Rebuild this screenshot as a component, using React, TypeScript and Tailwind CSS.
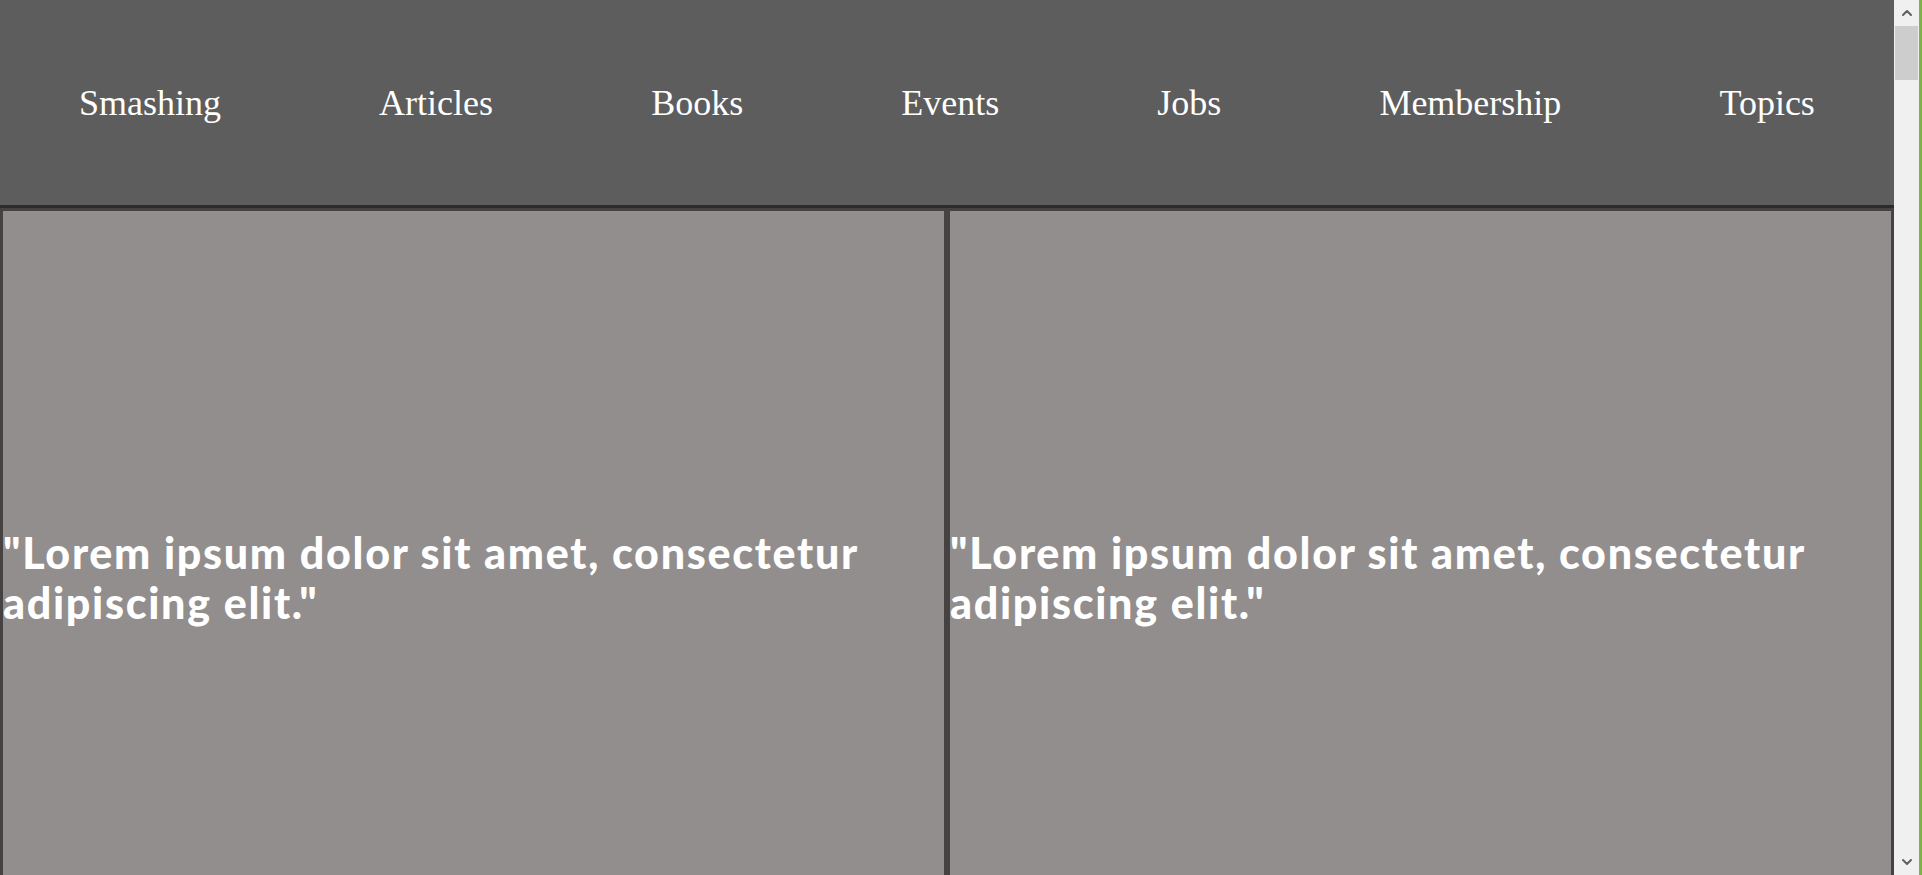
import React from 'react';
import { ChevronUp, ChevronDown } from 'lucide-react';

const links = ['Smashing', 'Articles', 'Books', 'Events', 'Jobs', 'Membership', 'Topics'];

const Quote = () => (
  <div className="flex-1 h-[740px] flex items-center border-[3px] border-[#464242] bg-[#928e8d]">
    <h2 className="text-white text-[43px] leading-[50px] tracking-[1.7px] font-black font-['Lato','Noto_Sans',sans-serif]">
      "Lorem ipsum dolor sit amet, consectetur adipiscing elit."
    </h2>
  </div>
);

const App = () => {
  return (
    <div className="h-[875px] w-full flex overflow-hidden bg-[#928e8d]">
      {/* Page */}
      <div className="flex-1 flex flex-col">
        <nav className="h-[208px] shrink-0 bg-[#5d5d5d] border-b-[3px] border-[#2c2c2c] flex items-center justify-around">
          {links.map((l) => (
            <a key={l} href="#" className="text-white text-[36px] font-['Liberation_Serif','Times_New_Roman',serif]">
              {l}
            </a>
          ))}
        </nav>
        <div className="flex">
          <Quote />
          <Quote />
        </div>
      </div>

      {/* Scrollbar */}
      <div className="w-[25px] shrink-0 bg-[#f0f0f0] flex flex-col">
        <div className="h-[26px] flex items-center justify-center text-[#606060]">
          <ChevronUp size={16} strokeWidth={3} />
        </div>
        <div className="mx-[1px] h-[54px] bg-[#cdcdcd]" />
        <div className="flex-1" />
        <div className="h-[26px] flex items-center justify-center text-[#606060]">
          <ChevronDown size={16} strokeWidth={3} />
        </div>
      </div>
      <div className="w-[3px] shrink-0 bg-[#7cb342]" />
    </div>
  );
};

export default App;
